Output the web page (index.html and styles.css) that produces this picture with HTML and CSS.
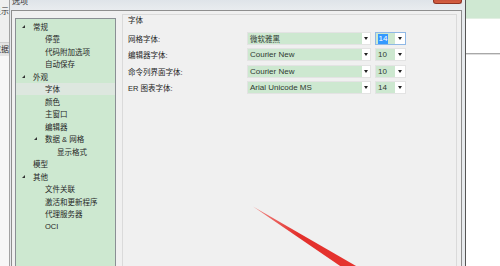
FILE: index.html
```html
<!DOCTYPE html>
<html lang="zh-CN">
<head>
<meta charset="utf-8">
<title>选项</title>
<link rel="stylesheet" href="styles.css">
</head>
<body>
<div class="screen">
  <div class="bgleft">
    <div class="bgl-top"><span>显示</span></div>
    <div class="bgl-row"><span>数据</span></div>
    <div class="bgl-rest"></div>
  </div>
  <div class="dialog">
    <div class="titlebar"><span class="title">选项</span><span class="close"></span></div>
    <div class="client">
      <div class="tree">
        <div class="node l0"><span class="tog"><i class="tri"></i></span><span>常规</span></div>
        <div class="node l1"><span class="tog"></span><span>停靠</span></div>
        <div class="node l1"><span class="tog"></span><span>代码附加选项</span></div>
        <div class="node l1"><span class="tog"></span><span>自动保存</span></div>
        <div class="node l0"><span class="tog"><i class="tri"></i></span><span>外观</span></div>
        <div class="node l1 selected"><span class="tog"></span><span>字体</span></div>
        <div class="node l1"><span class="tog"></span><span>颜色</span></div>
        <div class="node l1"><span class="tog"></span><span>主窗口</span></div>
        <div class="node l1"><span class="tog"></span><span>编辑器</span></div>
        <div class="node l1"><span class="tog"><i class="tri"></i></span><span>数据 &amp; 网格</span></div>
        <div class="node l2"><span class="tog"></span><span>显示格式</span></div>
        <div class="node l0"><span class="tog"></span><span>模型</span></div>
        <div class="node l0"><span class="tog"><i class="tri"></i></span><span>其他</span></div>
        <div class="node l1"><span class="tog"></span><span>文件关联</span></div>
        <div class="node l1"><span class="tog"></span><span>激活和更新程序</span></div>
        <div class="node l1"><span class="tog"></span><span>代理服务器</span></div>
        <div class="node l1"><span class="tog"></span><span>OCI</span></div>
      </div>
      <div class="panel">
        <div class="heading">字体</div>
        <div class="rows">
          <div class="row">
            <span class="label">网格字体:</span>
            <div class="combo font"><span class="val cjk">微软雅黑</span><span class="drop"><i></i></span></div>
            <div class="combo size focus"><span class="val"><span class="sel">14</span></span><span class="drop"><i></i></span></div>
          </div>
          <div class="row">
            <span class="label">编辑器字体:</span>
            <div class="combo font"><span class="val">Courier New</span><span class="drop"><i></i></span></div>
            <div class="combo size"><span class="val">10</span><span class="drop"><i></i></span></div>
          </div>
          <div class="row">
            <span class="label">命令列界面字体:</span>
            <div class="combo font"><span class="val">Courier New</span><span class="drop"><i></i></span></div>
            <div class="combo size"><span class="val">10</span><span class="drop"><i></i></span></div>
          </div>
          <div class="row">
            <span class="label">ER 图表字体:</span>
            <div class="combo font"><span class="val">Arial Unicode MS</span><span class="drop"><i></i></span></div>
            <div class="combo size"><span class="val">14</span><span class="drop"><i></i></span></div>
          </div>
        </div>
      </div>
    </div>
  </div>
  <div class="bgright">
    <div class="bgr-band"></div>
    <div class="bgr-gap"></div>
    <div class="bgr-line"></div>
  </div>
  <svg class="arrow" width="500" height="266" viewBox="0 0 500 266">
    <defs>
      <linearGradient id="rg" x1="0" y1="0" x2="1" y2="0.3">
        <stop offset="0" stop-color="#f08a86"/>
        <stop offset="0.5" stop-color="#e3302c"/>
        <stop offset="1" stop-color="#e5332e"/>
      </linearGradient>
    </defs>
    <polygon points="253,206.5 363,270 346,270" fill="url(#rg)"/>
  </svg>
</div>
</body>
</html>
```

FILE: styles.css
```css
html, body {
  margin: 0;
  padding: 0;
}
body {
  width: 500px;
  height: 266px;
  overflow: hidden;
  background: #ffffff;
  font-family: "Liberation Sans", "Noto Sans CJK SC", sans-serif;
  color: #222;
}
.screen {
  position: relative;
  display: flex;
  width: 500px;
  height: 266px;
  overflow: hidden;
}

/* background window on the left */
.bgleft {
  width: 9px;
  flex: none;
  display: flex;
  flex-direction: column;
  background: #f4f4f4;
}
.bgl-top {
  height: 42px;
  display: flex;
  justify-content: flex-end;
  overflow: hidden;
  background: #efefef;
  border-bottom: 1px solid #cfcfcf;
  font-family: "Noto Sans CJK SC", sans-serif;
  font-size: 8px;
  line-height: 22px;
  color: #333;
  white-space: nowrap;
}
.bgl-row {
  height: 13px;
  display: flex;
  justify-content: flex-end;
  overflow: hidden;
  background: #e4e4e4;
  font-family: "Noto Sans CJK SC", sans-serif;
  font-size: 8px;
  line-height: 12px;
  color: #333;
  white-space: nowrap;
}
.bgl-rest {
  flex: 1;
  background: #f7f7f7;
}

/* dialog */
.dialog {
  width: 457px;
  flex: none;
  box-sizing: border-box;
  display: flex;
  flex-direction: column;
  background: #e7eaed;
  border-left: 1px solid #a3a3a3;
  border-right: 1px solid #555;
  padding: 0 3px 0 1px;
}
.titlebar {
  height: 10px;
  flex: none;
  display: flex;
  align-items: flex-start;
  background: linear-gradient(#dfe4e9, #e9ecef);
}
.title {
  padding-left: 1px;
  font-family: "Noto Sans CJK SC", sans-serif;
  font-size: 8px;
  line-height: 2px;
  color: #333;
}
.close {
  margin-left: auto;
  width: 29px;
  height: 4px;
  box-sizing: border-box;
  background: linear-gradient(#c9533c, #d6603f);
  border: 1px solid #8f3322;
  border-top: none;
  border-radius: 0 0 3px 3px;
}
.client {
  flex: 1;
  display: flex;
  align-items: flex-start;
  background: #f0f0f0;
  border: 1px solid #8e8e8e;
  border-bottom: none;
  min-height: 0;
}

/* tree */
.tree {
  width: 101px;
  height: 260px;
  flex: none;
  box-sizing: border-box;
  margin: 7px 0 0 3px;
  padding-top: 1px;
  background: #cde8d0;
  border: 1px solid #8a8f94;
  border-bottom: none;
  font-size: 7.5px;
}
.node {
  display: flex;
  align-items: center;
  height: 12.5px;
  white-space: nowrap;
  color: #262626;
}
.node.l0 { padding-left: 5px; }
.node.l1 { padding-left: 17px; }
.node.l2 { padding-left: 29px; }
.node.selected {
  background: #dde7df;
}
.tog {
  width: 12px;
  flex: none;
  display: flex;
  align-items: center;
}
.tri {
  display: block;
  width: 0;
  height: 0;
  margin-left: 1px;
  border-left: 3px solid transparent;
  border-bottom: 3px solid #333;
}

/* right panel */
.panel {
  width: 335px;
  height: 255px;
  flex: none;
  box-sizing: border-box;
  margin: 3px 0 0 6px;
  padding-left: 5px;
  border: 1px solid #dadada;
  border-bottom: none;
  font-size: 7.5px;
}
.heading {
  line-height: 11px;
  color: #262626;
}
.rows {
  display: flex;
  flex-direction: column;
  gap: 3.33px;
  margin-top: 6px;
}
.row {
  display: flex;
  align-items: center;
  height: 13px;
}
.label {
  width: 119px;
  flex: none;
  white-space: nowrap;
  color: #262626;
}
.combo {
  height: 13px;
  box-sizing: border-box;
  display: flex;
  background: #ffffff;
  border: 1px solid #e3e3e3;
}
.combo .val {
  display: flex;
  align-items: center;
  background: #cde8d0;
  padding-left: 2px;
  font-size: 8px;
  color: #2f3a30;
  white-space: nowrap;
  overflow: hidden;
}
.combo .val.cjk {
  font-size: 7.5px;
}
.combo.font {
  width: 124px;
}
.combo.font .val {
  width: 112px;
}
.combo.size {
  width: 31px;
  margin-left: 4px;
}
.combo.size .val {
  width: 17px;
}
.combo.focus {
  border-color: #8fb8e6;
}
.sel {
  background: #3399ff;
  color: #ffffff;
  line-height: 10px;
  padding: 0 0.5px;
}
.drop {
  flex: 1;
  display: flex;
  align-items: center;
  justify-content: center;
}
.drop i {
  display: block;
  width: 0;
  height: 0;
  border-left: 2.5px solid transparent;
  border-right: 2.5px solid transparent;
  border-top: 3px solid #222;
}

/* background window on the right */
.bgright {
  flex: 1;
  display: flex;
  flex-direction: column;
  background: #ffffff;
}
.bgr-band {
  height: 18px;
  background: #cfe8d2;
  border-bottom: 1px solid #e2efe3;
}
.bgr-gap {
  height: 34px;
}
.bgr-line {
  height: 1px;
  background: #a8a8a8;
  border-bottom: 1px solid #dedede;
}

/* red annotation arrow */
.arrow {
  position: absolute;
  left: 0;
  top: 0;
  pointer-events: none;
}
```
